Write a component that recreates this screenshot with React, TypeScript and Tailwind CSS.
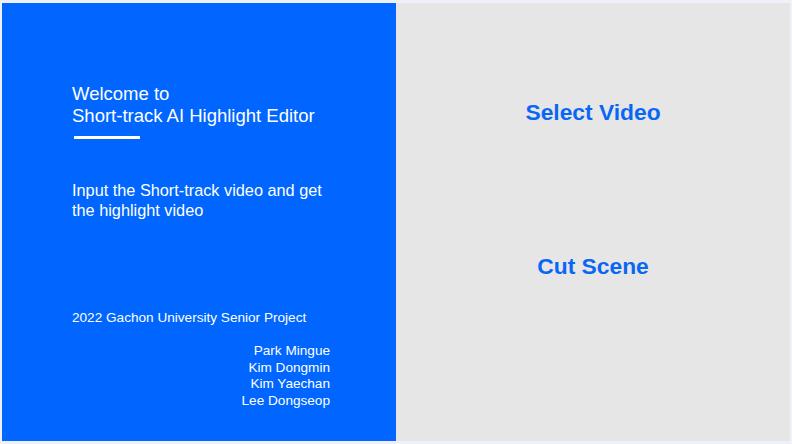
export default function App() {
  return (
    <div
      className="w-[792px] h-[444px] bg-[#eef2f8] flex pt-[3px] pb-[3px] pl-[2px] pr-[2px] overflow-hidden"
      style={{ fontFamily: '"Liberation Sans", Arial, sans-serif' }}
    >
      <div className="w-[394px] h-full bg-[#0066ff] text-white flex flex-col pl-[70px]">
        <div className="mt-[80px] text-[18.5px] leading-[22px]">
          <div>Welcome to</div>
          <div>Short-track AI Highlight Editor</div>
        </div>
        <div className="mt-[9px] ml-[2px] w-[66px] h-[3px] bg-white" />
        <div className="mt-[41px] text-[16.3px] leading-[20px]">
          <div>Input the Short-track video and get</div>
          <div>the highlight video</div>
        </div>
        <div className="mt-[89px] text-[13.6px] leading-[18px]">2022 Gachon University Senior Project</div>
        <div className="mt-[16px] w-[258px] text-right text-[13.6px] leading-[16.7px]">
          <div>Park Mingue</div>
          <div>Kim Dongmin</div>
          <div>Kim Yaechan</div>
          <div>Lee Dongseop</div>
        </div>
      </div>
      <div className="flex-1 h-full bg-[#e6e6e6] flex flex-col items-center text-[#0a66f5] font-bold text-[22.8px] leading-[26px]">
        <div className="mt-[96px]">Select Video</div>
        <div className="mt-[128px]">Cut Scene</div>
      </div>
    </div>
  );
}
